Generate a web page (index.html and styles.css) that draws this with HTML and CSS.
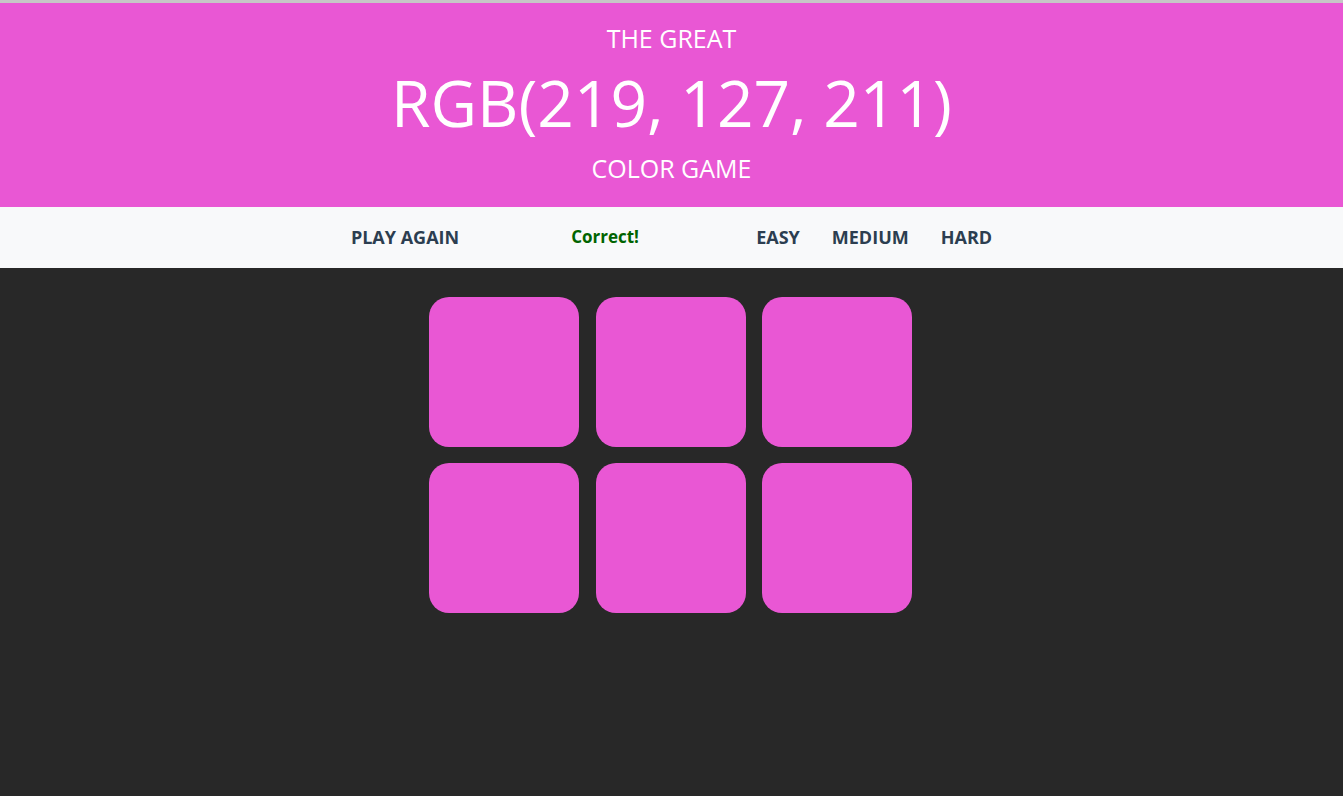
FILE: index.html
```html
<!DOCTYPE html>
<html>
<head>
<meta charset="utf-8">
<link rel="stylesheet" href="styles.css">
</head>
<body>
<header class="header">
  <div class="sub">THE GREAT</div>
  <h1 class="rgb">RGB(219, 127, 211)</h1>
  <div class="sub">COLOR GAME</div>
</header>
<nav class="bar">
  <button class="btn play">PLAY AGAIN</button>
  <span class="msg">Correct!</span>
  <div class="modes">
    <button class="btn">EASY</button>
    <button class="btn">MEDIUM</button>
    <button class="btn">HARD</button>
  </div>
</nav>
<main class="board">
  <div class="grid">
    <div class="sq"></div>
    <div class="sq"></div>
    <div class="sq"></div>
    <div class="sq"></div>
    <div class="sq"></div>
    <div class="sq"></div>
  </div>
</main>
</body>
</html>
```

FILE: styles.css
```css
html, body {
  margin: 0;
  padding: 0;
  height: 100%;
}
body {
  background: #282828;
  font-family: "Open Sans", "Noto Sans", sans-serif;
  border-top: 3px solid #c6c6c6;
  box-sizing: border-box;
}
.header {
  background: #e957d4;
  color: #ffffff;
  text-align: center;
  height: 204px;
  display: flex;
  flex-direction: column;
  align-items: center;
  justify-content: center;
}
.sub {
  font-size: 25px;
  line-height: 30px;
}
.sub:first-child {
  margin-top: -4px;
}
.rgb {
  margin: 0;
  font-weight: 400;
  font-size: 64px;
  line-height: 100px;
}
.bar {
  background: #f8f9fa;
  height: 61px;
  display: flex;
  align-items: center;
  justify-content: center;
}
.btn {
  background: none;
  border: none;
  padding: 0;
  font-family: inherit;
  font-weight: 700;
  font-size: 18px;
  line-height: 24px;
  color: #2c3e50;
  margin-top: -2px;
}
.play {
  margin-right: 112px;
}
.msg {
  color: #006400;
  font-weight: 700;
  font-size: 17px;
  line-height: 24px;
  margin-top: -2px;
  width: 185px;
}
.modes {
  display: flex;
  gap: 32px;
}
.board {
  display: flex;
  justify-content: center;
  padding-top: 29px;
  padding-right: 2px;
}
.grid {
  display: grid;
  grid-template-columns: repeat(3, 150px);
  grid-auto-rows: 150px;
  gap: 16px 16.5px;
}
.sq {
  background: #e957d4;
  border-radius: 20px;
}
```
